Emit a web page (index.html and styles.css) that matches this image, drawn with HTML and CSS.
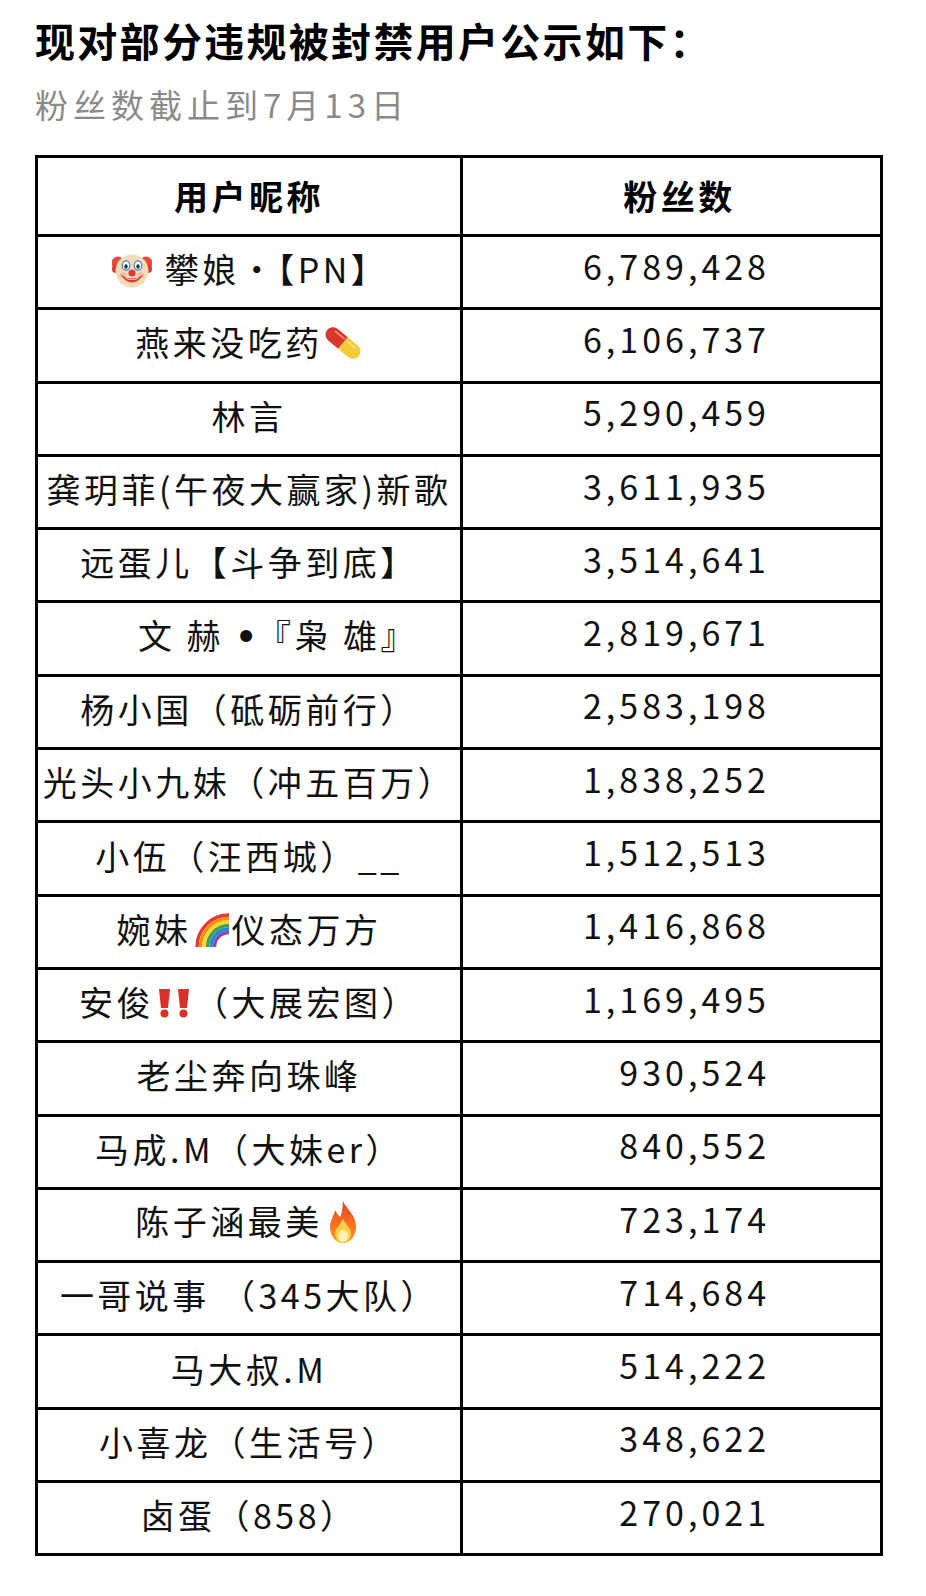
FILE: index.html
```html
<!DOCTYPE html>
<html lang="zh-CN">
<head>
<meta charset="utf-8">
<title>封禁用户公示</title>
<link rel="stylesheet" href="styles.css">
</head>
<body>
<div class="page">
  <h1 class="title">现对部分违规被封禁用户公示如下：</h1>
  <p class="sub">粉丝数截止到7月13日</p>
  <div class="table">
    <div class="cell head">用户昵称</div>
    <div class="cell head head-num">粉丝数</div>

    <div class="cell"><span><svg class="emo clown" viewBox="0 0 40 38"><circle cx="6" cy="12" r="6.5" fill="#e8473a"/><circle cx="34" cy="12" r="6.5" fill="#e8473a"/><circle cx="4" cy="18" r="4" fill="#d93a30"/><circle cx="36" cy="18" r="4" fill="#d93a30"/><circle cx="20" cy="20" r="16.5" fill="#f6dcb6"/><ellipse cx="11" cy="24" rx="3.5" ry="2.5" fill="#f2b7a0"/><ellipse cx="29" cy="24" rx="3.5" ry="2.5" fill="#f2b7a0"/><ellipse cx="14" cy="14.5" rx="3.8" ry="4.8" fill="#fff" stroke="#4f8fd6" stroke-width="1.4"/><ellipse cx="26" cy="14.5" rx="3.8" ry="4.8" fill="#fff" stroke="#4f8fd6" stroke-width="1.4"/><ellipse cx="14" cy="15.5" rx="1.7" ry="2.2" fill="#2d2d2d"/><ellipse cx="26" cy="15.5" rx="1.7" ry="2.2" fill="#2d2d2d"/><path d="M8.5 24 Q20 39 31.5 24 Q20 31 8.5 24 Z" fill="#e2362f"/><path d="M12 26.5 Q20 31.5 28 26.5 Q20 30 12 26.5 Z" fill="#fff"/><circle cx="20" cy="22" r="3.6" fill="#e53935"/></svg> 攀娘·【PN】</span></div>
    <div class="cell num">6,789,428</div>

    <div class="cell"><span>燕来没吃药<svg class="emo pill" viewBox="0 0 36 38"><g transform="rotate(40 18 19)"><path d="M18 11.5 H5 A7.5 7.5 0 0 0 5 26.5 H18 Z" fill="#d9362c"/><path d="M18 11.5 H31 A7.5 7.5 0 0 1 31 26.5 H18 Z" fill="#f2cb36"/><path d="M5 15 H16" stroke="#f5948a" stroke-width="1.6" stroke-linecap="round"/><path d="M20 15 H30" stroke="#fbe58a" stroke-width="1.6" stroke-linecap="round"/></g></svg></span></div>
    <div class="cell num">6,106,737</div>

    <div class="cell"><span>林言</span></div>
    <div class="cell num">5,290,459</div>

    <div class="cell"><span>龚玥菲(午夜大赢家)新歌</span></div>
    <div class="cell num">3,611,935</div>

    <div class="cell"><span>远蛋儿【斗争到底】</span></div>
    <div class="cell num">3,514,641</div>

    <div class="cell"><span class="shift">文 赫 <span class="dot">•</span>『枭 雄』</span></div>
    <div class="cell num">2,819,671</div>

    <div class="cell"><span>杨小国（砥砺前行）</span></div>
    <div class="cell num">2,583,198</div>

    <div class="cell"><span>光头小九妹（冲五百万）</span></div>
    <div class="cell num">1,838,252</div>

    <div class="cell"><span>小伍（汪西城）__</span></div>
    <div class="cell num">1,512,513</div>

    <div class="cell"><span>婉妹<svg class="emo rainbow" viewBox="0 0 36 36" fill="none" stroke-width="3.4"><path d="M3 35 A32 32 0 0 1 35 3" stroke="#e53935"/><path d="M6.5 35 A28.5 28.5 0 0 1 35 6.5" stroke="#fb8c00"/><path d="M10 35 A25 25 0 0 1 35 10" stroke="#fdd835"/><path d="M13.5 35 A21.5 21.5 0 0 1 35 13.5" stroke="#43a047"/><path d="M17 35 A18 18 0 0 1 35 17" stroke="#1e88e5"/><path d="M20.5 35 A14.5 14.5 0 0 1 35 20.5" stroke="#8e44ad"/></svg>仪态万方</span></div>
    <div class="cell num">1,416,868</div>

    <div class="cell"><span>安俊<svg class="emo bang" viewBox="0 0 36 30"><path d="M3 1 H14 L12 20 H5 Z" fill="#d8312a"/><circle cx="8.5" cy="25.5" r="4" fill="#d8312a"/><path d="M22 1 H33 L31 20 H24 Z" fill="#d8312a"/><circle cx="27.5" cy="25.5" r="4" fill="#d8312a"/></svg>（大展宏图）</span></div>
    <div class="cell num">1,169,495</div>

    <div class="cell"><span>老尘奔向珠峰</span></div>
    <div class="cell num">930,524</div>

    <div class="cell"><span>马成.M（大妹er）</span></div>
    <div class="cell num">840,552</div>

    <div class="cell"><span>陈子涵最美<svg class="emo fire" viewBox="0 0 36 44"><defs><linearGradient id="fl" x1="0" y1="0" x2="0" y2="1"><stop offset="0" stop-color="#ee3f24"/><stop offset="1" stop-color="#ff9b1f"/></linearGradient></defs><path d="M18 1 C21 9 31 14 31 27 C31 36 25 43 18 43 C11 43 5 36 5 27 C5 20 9 16 10 10 C12 14 14 16 15.5 17 C17 12 18 6 18 1 Z" fill="url(#fl)"/><path d="M18 19 C21 25 26 28 26 33 C26 39 22 43 18 43 C14 43 10 39 10 33 C10 29 14 27 16 22 Z" fill="#ffcf48"/><ellipse cx="18" cy="36" rx="5" ry="6" fill="#fff1b8"/></svg></span></div>
    <div class="cell num">723,174</div>

    <div class="cell"><span>一哥说事 （345大队）</span></div>
    <div class="cell num">714,684</div>

    <div class="cell"><span>马大叔.M</span></div>
    <div class="cell num">514,222</div>

    <div class="cell"><span>小喜龙（生活号）</span></div>
    <div class="cell num">348,622</div>

    <div class="cell"><span>卤蛋（858）</span></div>
    <div class="cell num">270,021</div>
  </div>
</div>
</body>
</html>
```
FILE: styles.css
```css
html, body {
  margin: 0;
  padding: 0;
  background: #fff;
}

.page {
  padding: 16px 0 0 35px;
  font-family: "Noto Sans CJK SC", "Noto Sans", sans-serif;
  color: #111;
}

.title {
  margin: 0;
  font-size: 40px;
  line-height: 48px;
  font-weight: 700;
  letter-spacing: 2.3px;
  color: #000;
}

.sub {
  margin: 20px 0 0;
  font-size: 33px;
  line-height: 40px;
  letter-spacing: 5px;
  color: #8a8a8a;
}

.table {
  margin-top: 31px;
  width: 842px;
  display: grid;
  grid-template-columns: 422px 417px;
  grid-template-rows: 76px;
  grid-auto-rows: 70.3px;
  gap: 3px;
  background: #000;
  border: 3px solid #000;
}

.cell {
  background: #fff;
  display: flex;
  align-items: center;
  justify-content: center;
  padding-bottom: 6px;
  font-size: 34px;
  line-height: 40px;
  letter-spacing: 3.5px;
  white-space: nowrap;
  color: #111;
}

.head {
  padding-bottom: 0;
  font-weight: 700;
  color: #000;
}

.head-num {
  padding-left: 16px;
}

.num {
  justify-content: flex-end;
  padding-right: 110px;
  padding-bottom: 13px;
  letter-spacing: 4px;
}

.shift {
  margin-left: 58px;
}

.dot {
  font-family: "DejaVu Sans", sans-serif;
  font-weight: 700;
  letter-spacing: 0;
}

.emo {
  margin: 0 2px;
}

.clown {
  width: 40px;
  height: 38px;
  vertical-align: -6px;
}

.pill {
  width: 36px;
  height: 38px;
  vertical-align: -6px;
}

.rainbow {
  width: 36px;
  height: 36px;
  vertical-align: -5px;
}

.bang {
  width: 36px;
  height: 30px;
  vertical-align: -2px;
}

.fire {
  width: 36px;
  height: 44px;
  vertical-align: -9px;
}
```
